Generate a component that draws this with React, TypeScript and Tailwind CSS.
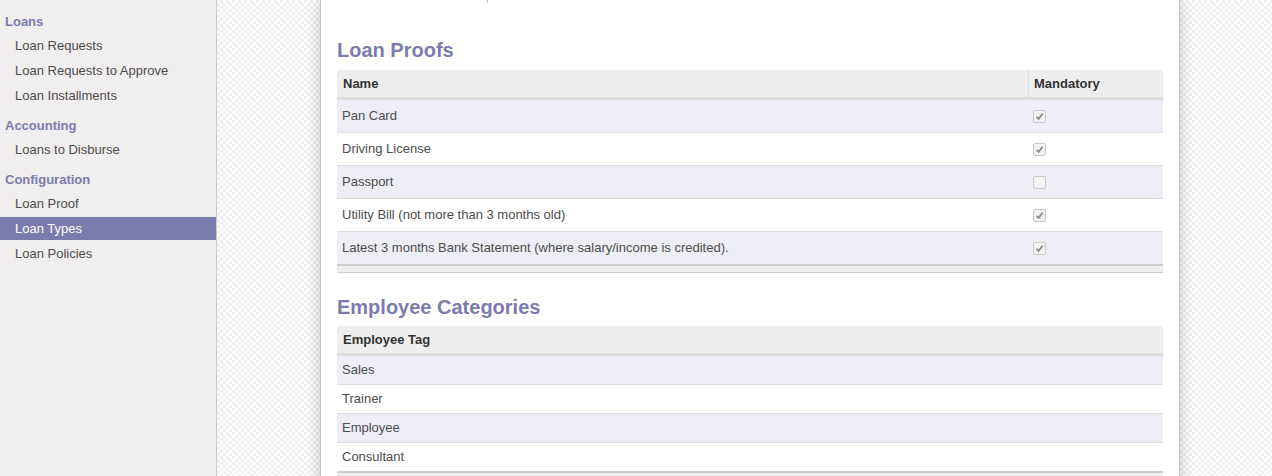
import React from 'react'

const menu = [
  { title: 'Loans', items: ['Loan Requests', 'Loan Requests to Approve', 'Loan Installments'] },
  { title: 'Accounting', items: ['Loans to Disburse'] },
  { title: 'Configuration', items: ['Loan Proof', 'Loan Types', 'Loan Policies'] },
]

const proofs = [
  { name: 'Pan Card', mandatory: true },
  { name: 'Driving License', mandatory: true },
  { name: 'Passport', mandatory: false },
  { name: 'Utility Bill (not more than 3 months old)', mandatory: true },
  { name: 'Latest 3 months Bank Statement (where salary/income is credited).', mandatory: true },
]

const tags = ['Sales', 'Trainer', 'Employee', 'Consultant']

function Checkbox({ checked }: { checked: boolean }) {
  return (
    <span className="flex h-[13px] w-[13px] items-center justify-center rounded-[2px] border border-[#c9c9c9] bg-[#f2f2f2]">
      {checked && (
        <svg width="9" height="9" viewBox="0 0 9 9">
          <path d="M1.5 4.8 L3.6 6.9 L7.6 1.8" fill="none" stroke="#8a8a8a" strokeWidth="1.8" />
        </svg>
      )}
    </span>
  )
}

function Sidebar() {
  return (
    <aside className="h-full w-[217px] shrink-0 border-r border-[#c8c8c8] bg-[#f0eeee] pt-[4px]">
      {menu.map((section) => (
        <div key={section.title} className="flex flex-col">
          <div className="h-[29px] pt-[8px] pl-[5px] text-[13px] font-bold leading-[20px] text-[#7c7bad]">
            {section.title}
          </div>
          {section.items.map((item) => {
            const active = item === 'Loan Types'
            return (
              <div
                key={item}
                className={
                  active
                    ? 'my-px h-[23px] bg-[#7c7bad] pl-[15px] text-[13px] leading-[23px] text-white'
                    : 'my-px h-[23px] pl-[15px] text-[13px] leading-[23px] text-[#4c4c4c]'
                }
              >
                {item}
              </div>
            )
          })}
        </div>
      ))}
    </aside>
  )
}

function Footer() {
  return <div className="h-[9px] border-t-2 border-b border-[#cccccc] bg-[#eeeeee]" />
}

export default function App() {
  return (
    <div className="flex h-[476px] w-[1272px] overflow-hidden font-['Liberation_Sans',Arial,sans-serif] text-[13px] text-[#4c4c4c]">
      <Sidebar />
      <main className="h-full flex-1 overflow-hidden bg-[image:repeating-conic-gradient(#efefef_0%_25%,#ffffff_0%_50%)] bg-[length:6px_6px]">
        <div className="ml-[103px] min-h-[600px] w-[860px] border-x border-[#c8c8d3] bg-white px-[16px] shadow-[0_0_14px_rgba(0,0,0,0.22)]">
          <div className="ml-[150px] h-[3px] w-px bg-[#c4c4c4]" />
          <h2 className="mt-[35px] mb-[8px] text-[20px] font-bold leading-[24px] text-[#7c7bad]">Loan Proofs</h2>
          <div>
            <div className="flex h-[29px] border-b-2 border-[#dddddd] bg-[#eeeeee] font-bold text-[#333333]">
              <div className="flex flex-1 items-center px-[6px]">Name</div>
              <div className="flex w-[135px] items-center border-l border-[#dddddd] px-[5px]">Mandatory</div>
            </div>
            {proofs.map((p, i) => (
              <div
                key={p.name}
                className={
                  i % 2 === 0
                    ? 'flex h-[33px] border-t border-[#dddddd] bg-[#eeeef6]'
                    : 'flex h-[33px] border-t border-[#dddddd] bg-white'
                }
              >
                <div className="flex flex-1 items-center px-[5px]">{p.name}</div>
                <div className="flex w-[135px] items-center pl-[5px]">
                  <Checkbox checked={p.mandatory} />
                </div>
              </div>
            ))}
            <Footer />
          </div>

          <h2 className="mt-[22px] mb-[7px] text-[20px] font-bold leading-[24px] text-[#7c7bad]">Employee Categories</h2>
          <div>
            <div className="flex h-[29px] items-center border-b-2 border-[#dddddd] bg-[#eeeeee] px-[6px] font-bold text-[#333333]">
              Employee Tag
            </div>
            {tags.map((t, i) => (
              <div
                key={t}
                className={
                  i % 2 === 0
                    ? 'flex h-[29px] items-center border-t border-[#dddddd] bg-[#eeeef6] px-[5px]'
                    : 'flex h-[29px] items-center border-t border-[#dddddd] bg-white px-[5px]'
                }
              >
                {t}
              </div>
            ))}
            <Footer />
          </div>
        </div>
      </main>
    </div>
  )
}
